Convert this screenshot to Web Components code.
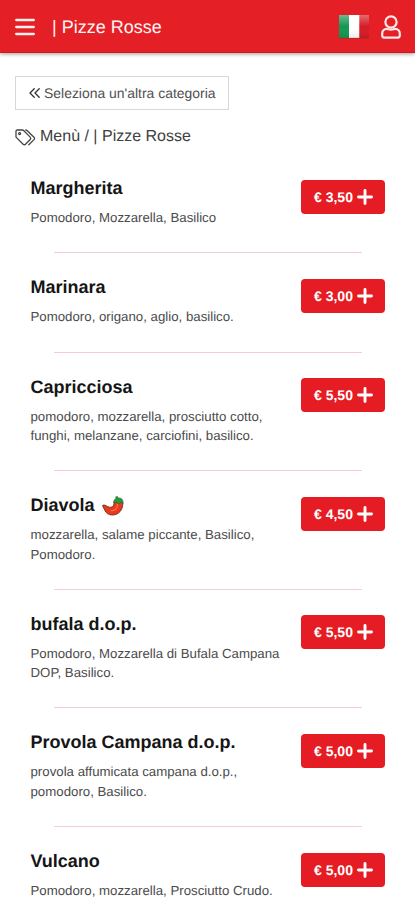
<!DOCTYPE html>
<html lang="it">
<head>
<meta charset="utf-8">
<title>Pizze Rosse</title>
<style>
html,body{margin:0;background:#fff}
body{font-family:"Liberation Sans",Arial,sans-serif;width:415px;height:900px;overflow:hidden;text-rendering:geometricPrecision;color:#222}
</style>
</head>
<body>
<menu-page></menu-page>
<script>
const define = (name, html, setup) => customElements.define(name, class extends HTMLElement {
  connectedCallback() {
    if (this.shadowRoot) return;
    this.attachShadow({mode: 'open'}).innerHTML = html;
    if (setup) setup(this, this.shadowRoot);
  }
});

define('app-header', `
<style>
:host{display:flex;align-items:center;box-sizing:border-box;height:53px;padding:2px 14px 0 15px;background:#e51f26;color:#fff;border-bottom:1.5px solid #d3151c;box-shadow:0 1px 4px rgba(0,0,0,.4)}
.title{font-size:18px;line-height:24px;margin-left:17px;flex:1;white-space:nowrap;color:#fff4f3}
svg{display:block;flex:none}
.user{margin-left:12px}
</style>
<svg width="20" height="18" viewBox="0 0 20 18" stroke="#fff0ef" stroke-width="2.3" stroke-linecap="round"><path d="M1.2 2h17.6M1.2 9h17.6M1.2 16h17.6"/></svg>
<div class="title"><slot></slot></div>
<svg width="30" height="24" viewBox="0 0 30 24">
  <defs><linearGradient id="g" x2="0" y2="1"><stop stop-color="#fff" stop-opacity=".35"/><stop offset=".5" stop-color="#fff" stop-opacity="0"/><stop offset="1" stop-color="#000" stop-opacity=".08"/></linearGradient></defs>
  <path d="M0 0h10.5v23H0z" fill="#159752"/><path d="M10 0h10.5v23H10z" fill="#fff"/><path d="M20.5 0H30v23h-9.500z" fill="#d51c25"/>
  <path d="M0 0h30v23H0z" fill="url(#g)"/><path d="M0 23.300h30" stroke="#9b2a21" stroke-opacity=".6"/>
</svg>
<svg class="user" width="20" height="24" viewBox="0 0 20 24" fill="none" stroke="#ffe9e8" stroke-width="2.200"><circle cx="10" cy="7" r="5.600"/><path d="M5.800 13.900c1.300 0 2 .7 4.200.7s2.900-.7 4.200-.7c2.700 0 4.600 2 4.600 4.600v2.100c0 1.200-.8 2-2 2H3.200c-1.200 0-2-.8-2-2v-2.100c0-2.600 1.900-4.600 4.600-4.600Z"/></svg>
`);

define('back-button', `
<style>
:host{display:flex;align-items:center;box-sizing:border-box;width:214px;height:34px;border:1px solid #d8d8d8;padding-left:13px;font-size:13.950px;color:#505050;white-space:nowrap}
svg{margin-right:4px;flex:none}
</style>
<svg width="11" height="10" viewBox="0 0 11 10" fill="none" stroke="#333" stroke-width="1.300" stroke-linecap="round" stroke-linejoin="round"><path d="M5.200.8 1 5l4.200 4.200M10.200.8 6 5l4.200 4.200"/></svg>
<slot></slot>
`);

define('bread-crumb', `
<style>
:host{display:flex;align-items:center;height:22px;font-size:16px;color:#404040;white-space:nowrap}
svg{margin-right:4px;flex:none}
</style>
<svg width="21" height="17" viewBox="0 0 21 17" fill="none" stroke="#444" stroke-width="1.300" stroke-linejoin="round" stroke-linecap="round"><path d="M1 2.200v5.200c0 .5.200.9.500 1.200l6.600 6.600c.7.700 1.700.7 2.400 0l4.700-4.700c.7-.7.7-1.700 0-2.400L8.600 1.500C8.300 1.200 7.900 1 7.400 1H2.200C1.500 1 1 1.500 1 2.200Z"/><circle cx="4.600" cy="4.600" r="1"/><path d="M10.800 1c.5 0 .9.200 1.200.5l7 6.700c.7.700.7 1.700 0 2.400l-5.200 5.100"/></svg>
<slot></slot>
`);

define('price-button', `
<style>
:host{display:flex;align-items:center;box-sizing:border-box;width:84px;height:34px;padding-left:13px;background:#e51c23;border-radius:4px;color:#fff;font-size:14px;font-weight:bold;white-space:nowrap;flex:none}
svg{margin-left:4px;flex:none}
</style>
<slot></slot>
<svg width="16" height="16" viewBox="0 0 16 16" stroke="#fff" stroke-width="2.900" stroke-linecap="round"><path d="M8 1.500v13M1.500 8h13"/></svg>
`);

define('chili-icon', `
<style>:host{display:inline-block;width:22px;height:20px;vertical-align:-5px;margin-left:2px}svg{display:block}</style>
<svg width="22" height="20" viewBox="0 0 22 20"><path d="M12 5.500C12.500 9 11 11.700 7.500 11.200 5 10.800 3 8.400.8 9.200c-.4 1.500 1.100 2.900 1.900 4.900 1.300 2.900 3.700 5 7.800 4.900 6-.2 10.600-4.600 10.300-12.500Z" fill="#e93a20" stroke="#6d2a18" stroke-width=".9"/><path d="M15.500 8.500c.2 3.500-2 6-6 6.200" fill="none" stroke="#ff7146" stroke-width="1.300" stroke-linecap="round"/><path d="M11.700 7c-.3-2.600.9-4.100 2.500-4.600L13.600.9l2-.5.700 1.500c3.300-.2 4.900 1.600 4.900 5.400l-2.500-.9-1.900 1.500-2.500-1.600Z" fill="#259b38" stroke="#245926" stroke-width=".5"/></svg>
`);

define('pizza-row', `
<style>
:host{display:block;padding:0 30px}
.row{display:flex;justify-content:space-between;align-items:flex-start;padding:23px 0 25px}
.info{width:256px;padding-left:.5px}
h2{margin:0 0 9px;font-size:18px;line-height:22px;height:22px;color:#151515;white-space:nowrap}
p{margin:0;font-size:13.250px;line-height:19.300px;color:#4b4b4b}
price-button{margin-top:2.600px}
hr{margin:0 23px 0 24px;border:0;height:1px;background:#f5cdd0}
</style>
<div class="row"><div class="info"><h2><slot name="title"></slot></h2><p><slot></slot></p></div><price-button></price-button></div><hr>
`, (el, root) => { root.querySelector('price-button').textContent = el.getAttribute('price'); });

define('menu-page', `
<style>
:host{display:block;width:415px}
back-button{margin:23px 0 0 15px}
bread-crumb{margin:16px 0 0 15px}
.list{margin-top:6.100px}
</style>
<app-header>| Pizze Rosse</app-header>
<back-button>Seleziona un'altra categoria</back-button>
<bread-crumb>Menù / | Pizze Rosse</bread-crumb>
<div class="list">
<pizza-row price="€ 3,50"><span slot="title">Margherita</span>Pomodoro, Mozzarella, Basilico</pizza-row>
<pizza-row price="€ 3,00"><span slot="title">Marinara</span>Pomodoro, origano, aglio, basilico.</pizza-row>
<pizza-row price="€ 5,50"><span slot="title">Capricciosa</span>pomodoro, mozzarella, prosciutto cotto, funghi, melanzane, carciofini, basilico.</pizza-row>
<pizza-row price="€ 4,50"><span slot="title">Diavola <chili-icon></chili-icon></span>mozzarella, salame piccante, Basilico, Pomodoro.</pizza-row>
<pizza-row price="€ 5,50"><span slot="title">bufala d.o.p.</span>Pomodoro, Mozzarella di Bufala Campana DOP, Basilico.</pizza-row>
<pizza-row price="€ 5,00"><span slot="title">Provola Campana d.o.p.</span>provola affumicata campana d.o.p., pomodoro, Basilico.</pizza-row>
<pizza-row price="€ 5,00"><span slot="title">Vulcano</span>Pomodoro, mozzarella, Prosciutto Crudo.</pizza-row>
</div>
`);
</script>
</body>
</html>
